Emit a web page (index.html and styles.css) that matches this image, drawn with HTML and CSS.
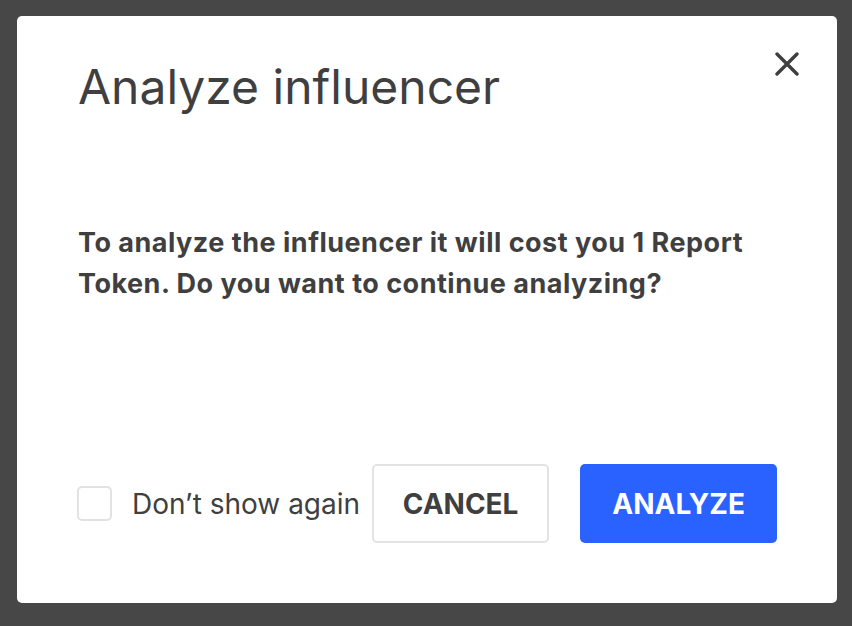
FILE: index.html
```html
<!DOCTYPE html>
<html>
<head>
<meta charset="utf-8">
<link rel="stylesheet" href="styles.css">
</head>
<body>
<div class="dialog">
  <div class="header">
    <h1 class="title">Analyze influencer</h1>
    <button class="close" aria-label="Close">
      <svg width="24" height="24" viewBox="0 0 24 24"><path d="M2 2 L22 22 M22 2 L2 22" stroke="#3f3f3f" stroke-width="3.4" stroke-linecap="round" fill="none"/></svg>
    </button>
  </div>
  <p class="message">To analyze the influencer it will cost you 1 Report Token. Do you want to continue analyzing?</p>
  <div class="footer">
    <label class="check"><span class="box"></span><span class="check-label">Don’t show again</span></label>
    <button class="btn btn-cancel">CANCEL</button>
    <button class="btn btn-primary">ANALYZE</button>
  </div>
</div>
</body>
</html>
```
FILE: styles.css
```css
html, body {
  margin: 0;
  height: 100%;
}
body {
  background: #474747;
  padding: 16px 15px 23px 17px;
  box-sizing: border-box;
  font-family: Inter, "Noto Sans", sans-serif;
  color: #3f3f3f;
}
.dialog {
  background: #fff;
  border-radius: 5px;
  height: 100%;
  box-sizing: border-box;
  padding: 41px 60px 60px 61px;
  display: flex;
  flex-direction: column;
}
.header {
  display: flex;
  justify-content: space-between;
  align-items: flex-start;
}
.title {
  margin: 0;
  font-size: 48px;
  font-weight: 400;
  line-height: 60px;
  color: #3f3f3f;
}
.close {
  background: none;
  border: 0;
  padding: 0;
  margin: -5px -22px 0 0;
  width: 24px;
  height: 24px;
  cursor: pointer;
}
.message {
  margin: 105px 0 0 0;
  font-size: 27px;
  letter-spacing: 0.5px;
  font-weight: 700;
  line-height: 41px;
  color: #3f3f3f;
}
.footer {
  margin-top: auto;
  display: flex;
  align-items: center;
}
.check {
  display: flex;
  align-items: center;
  flex-shrink: 0;
  margin-left: -1px;
}
.box {
  flex-shrink: 0;
  width: 31px;
  height: 31px;
  border: 2px solid #e2e2e2;
  border-radius: 5px;
}
.check-label {
  margin-left: 20px;
  font-size: 28px;
  white-space: nowrap;
  color: #3f3f3f;
}
.btn {
  flex-shrink: 0;
  font-family: Inter, "Noto Sans", sans-serif;
  font-weight: 700;
  font-size: 28px;
  height: 79px;
  border-radius: 5px;
  box-sizing: border-box;
  cursor: pointer;
}
.btn-cancel {
  margin-left: 12px;
  width: 177px;
  background: #fff;
  border: 2px solid #e3e3e3;
  color: #3f3f3f;
}
.btn-primary {
  margin-left: 31px;
  width: 197px;
  background: #2962ff;
  border: 0;
  color: #fff;
}
```
